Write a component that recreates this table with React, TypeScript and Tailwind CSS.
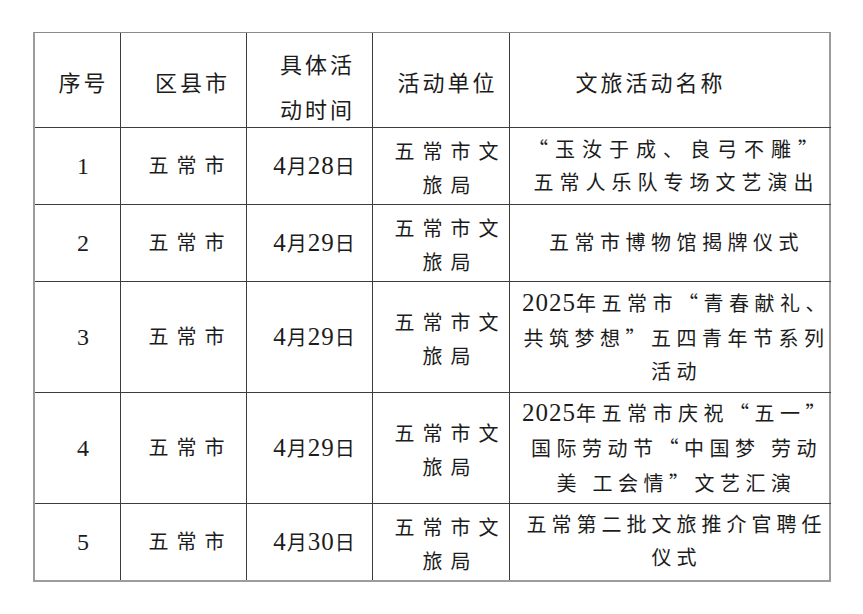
import React from "react";

const Q = ({ c }: { c: string }) => (
  <span className="font-['Noto_Sans_CJK_SC',sans-serif]">{c}</span>
);
const D = ({ c }: { c: string }) => (
  <span className="text-[25px] tracking-[1px]">{c}</span>
);

type Cell = { node: React.ReactNode };

const date = (d: string) => (
  <div>
    <D c="4" />月<D c={d} />日
  </div>
);

const rows: Cell[][] = [
  [
    { node: "1" },
    { node: "五常市" },
    { node: date("28") },
    { node: <>五常市文<br />旅局</> },
    {
      node: (
        <>
          <div className="tracking-[7px]"><Q c="“" />玉汝于成、良弓不雕<Q c="”" /></div>
          <div className="tracking-[6px]">五常人乐队专场文艺演出</div>
        </>
      ),
    },
  ],
  [
    { node: "2" },
    { node: "五常市" },
    { node: date("29") },
    { node: <>五常市文<br />旅局</> },
    { node: <div className="tracking-[5.5px]">五常市博物馆揭牌仪式</div> },
  ],
  [
    { node: "3" },
    { node: "五常市" },
    { node: date("29") },
    { node: <>五常市文<br />旅局</> },
    {
      node: (
        <>
          <div className="tracking-[5.5px]"><D c="2025" />年五常市<Q c="“" />青春献礼、</div>
          <div className="tracking-[5.5px]">共筑梦想<Q c="”" />五四青年节系列</div>
          <div className="tracking-[5.5px]">活动</div>
        </>
      ),
    },
  ],
  [
    { node: "4" },
    { node: "五常市" },
    { node: date("29") },
    { node: <>五常市文<br />旅局</> },
    {
      node: (
        <>
          <div className="tracking-[5.5px]"><D c="2025" />年五常市庆祝<Q c="“" />五一<Q c="”" /></div>
          <div className="tracking-[5.5px]">国际劳动节<Q c="“" />中国梦 劳动</div>
          <div className="tracking-[5.5px]">美 工会情<Q c="”" />文艺汇演</div>
        </>
      ),
    },
  ],
  [
    { node: "5" },
    { node: "五常市" },
    { node: date("30") },
    { node: <>五常市文<br />旅局</> },
    {
      node: (
        <>
          <div className="tracking-[5px]">五常第二批文旅推介官聘任</div>
          <div className="tracking-[5px]">仪式</div>
        </>
      ),
    },
  ],
];

export default function App() {
  const base =
    "flex flex-col items-center justify-center text-center border-[#3c3c3c] whitespace-nowrap";
  return (
    <div className="w-[863px] h-[614px] bg-white text-[#1c1c1c] font-['Liberation_Serif','Noto_Sans_CJK_SC',serif] pt-[32px] pl-[33px]">
      <div className="w-[798px] grid grid-cols-[86px_126px_126px_137px_1fr] grid-rows-[95px_77px_77px_111px_111px_76px] border-l-2 border-r-2 border-t border-b-2 border-l-[#9c9c9c] border-r-[#9c9c9c] border-t-[#8a8a8a] border-b-[#9c9c9c]">
        <div className={`${base} border-r border-b pl-[12px] pt-[6px] text-[22px] tracking-[3px]`}>序号</div>
        <div className={`${base} border-r border-b pl-[18px] pt-[6px] text-[22px] tracking-[3px]`}>区县市</div>
        <div className={`${base} border-r border-b pl-[16px] pt-[15px] text-[22px] tracking-[3px] leading-[45px]`}>
          <div>具体活</div>
          <div>动时间</div>
        </div>
        <div className={`${base} border-r border-b pl-[13px] pt-[6px] text-[22px] tracking-[3px]`}>活动单位</div>
        <div className={`${base} border-b pr-[40px] pt-[6px] text-[22px] tracking-[3px]`}>文旅活动名称</div>
        {rows.map((r, ri) => {
          const last = ri === rows.length - 1;
          return r.map((c, ci) => {
            const lastCol = ci === 4;
            const border = `${lastCol ? "" : "border-r"} ${last ? "" : "border-b"}`;
            let extra = "";
            if (ci === 0) extra = "pl-[11px] text-[24px]";
            if (ci === 1) extra = "pl-[14px] text-[20px] tracking-[8px]";
            if (ci === 2) extra = "pl-[10px] text-[20px] tracking-[1px]";
            if (ci === 3) extra = "pl-[19px] text-[20px] tracking-[8px] leading-[34px] pt-[6px]";
            if (ci === 4) extra = "pl-[12px] text-[20px] leading-[33px]";
            return (
              <div key={`${ri}-${ci}`} className={`${base} ${border} ${extra}`}>
                {c.node}
              </div>
            );
          });
        })}
      </div>
    </div>
  );
}
